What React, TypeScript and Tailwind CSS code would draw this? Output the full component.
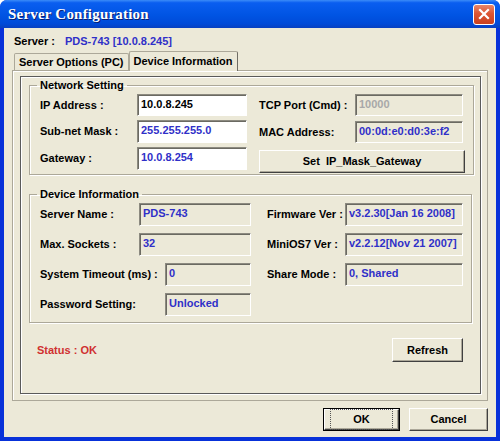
import type { ReactNode } from "react";

const BLUE = "text-[#3030c8]";

export default function App() {
  return (
    <div className="w-[500px] h-[444px] bg-white font-['Liberation_Sans',Arial,sans-serif] text-[11px] font-bold text-black">
      <div className="w-[500px] h-[441px] flex flex-col rounded-t-[7px] bg-[#0831d9] overflow-hidden">
        <TitleBar />
        <div className="flex-1 mx-[4px] mb-[4px] bg-[#ece9d8] flex flex-col">
          <div className="flex items-center h-[24px] pl-[10px] pt-[2px] gap-[10px]">
            <span>Server :</span>
            <span className={BLUE}>PDS-743 [10.0.8.245]</span>
          </div>

          <div className="flex items-end pl-[10px] h-[18px]">
            <div className="h-[17px] px-[4px] flex items-center border border-b-0 border-[#aca899] rounded-t-[2px] bg-[#ece9d8]">
              Server Options (PC)
            </div>
            <div className="h-[20px] px-[4px] flex items-center border border-b-0 border-[#aca899] border-r-[#6f6d64] rounded-t-[2px] bg-[#ece9d8] relative top-[1px] z-10">
              Device Information
            </div>
          </div>

          <div className="mx-[8px] h-[331px] border border-[#aca899] shadow-[inset_1px_1px_0_#fff] pt-[5px] pl-[7px] pr-[6px]">
            <div className="h-[318px] border border-[#5a5a5a] shadow-[1px_1px_0_#fff,inset_1px_1px_0_#fff] px-[8px] flex flex-col">
              <Group title="Network Setting" className="mt-[2px] h-[96px]">
                <div className="flex pt-[3px] pl-[10px] pr-[8px]">
                  <div className="flex flex-col gap-[4px] w-[208px]">
                    <Row label="IP Address :" labelW="w-[97px]">
                      <Field className="w-[110px] h-[22px] bg-white">10.0.8.245</Field>
                    </Row>
                    <Row label="Sub-net Mask :" labelW="w-[97px]">
                      <Field className={`w-[110px] h-[23px] bg-white ${BLUE}`}>255.255.255.0</Field>
                    </Row>
                    <Row label="Gateway :" labelW="w-[97px]">
                      <Field className={`w-[110px] h-[23px] bg-white ${BLUE}`}>10.0.8.254</Field>
                    </Row>
                  </div>
                  <div className="flex flex-col gap-[5px] ml-[11px] w-[206px]">
                    <Row label="TCP Port (Cmd) :" labelW="w-[96px]">
                      <Field className="w-[108px] h-[22px] bg-[#ece9d8] text-[#a8a8a8]">10000</Field>
                    </Row>
                    <Row label="MAC Address:" labelW="w-[96px]">
                      <Field className={`w-[108px] h-[22px] bg-[#ece9d8] ${BLUE}`}>00:0d:e0:d0:3e:f2</Field>
                    </Row>
                    <Btn className="mt-[2px] w-[206px] h-[23px]">Set&nbsp; IP_Mask_Gateway</Btn>
                  </div>
                </div>
              </Group>

              <Group title="Device Information" className="mt-[13px] h-[135px]">
                <div className="flex pt-[3px] pl-[10px]">
                  <div className="flex flex-col gap-[7px] w-[211px]">
                    <Row label="Server Name :" labelW="flex-1">
                      <Field className={`w-[112px] h-[23px] bg-[#ece9d8] ${BLUE}`}>PDS-743</Field>
                    </Row>
                    <Row label="Max. Sockets :" labelW="flex-1">
                      <Field className={`w-[112px] h-[23px] bg-[#ece9d8] ${BLUE}`}>32</Field>
                    </Row>
                    <Row label="System Timeout (ms) :" labelW="flex-1">
                      <Field className={`w-[86px] h-[23px] bg-[#ece9d8] ${BLUE}`}>0</Field>
                    </Row>
                    <Row label="Password Setting:" labelW="flex-1">
                      <Field className={`w-[86px] h-[23px] bg-[#ece9d8] ${BLUE}`}>Unlocked</Field>
                    </Row>
                  </div>
                  <div className="flex flex-col gap-[7px] ml-[16px] w-[196px]">
                    <Row label="Firmware Ver :" labelW="w-[78px]">
                      <Field className={`w-[118px] h-[23px] bg-[#ece9d8] ${BLUE}`}>v3.2.30[Jan 16 2008]</Field>
                    </Row>
                    <Row label="MiniOS7 Ver :" labelW="w-[78px]">
                      <Field className={`w-[118px] h-[23px] bg-[#ece9d8] ${BLUE}`}>v2.2.12[Nov 21 2007]</Field>
                    </Row>
                    <Row label="Share Mode :" labelW="w-[78px]">
                      <Field className={`w-[118px] h-[23px] bg-[#ece9d8] ${BLUE}`}>0, Shared</Field>
                    </Row>
                  </div>
                </div>
              </Group>

              <div className="flex items-center mt-[15px] pl-[8px] pr-[9px]">
                <span className="text-[#d03030]">Status : OK</span>
                <Btn className="ml-auto w-[71px] h-[24px]">Refresh</Btn>
              </div>
            </div>
          </div>

          <div className="flex justify-end gap-[9px] pr-[8px] mt-[7px]">
            <button className="w-[77px] h-[23px] border border-black bg-[#ece9d8] p-0">
              <span className="flex items-center justify-center w-full h-full border border-t-white border-l-white border-r-[#404040] border-b-[#404040] shadow-[inset_-1px_-1px_0_#aca899]">
                <span className="px-[22px] py-[1px] border border-dotted border-[#555]">OK</span>
              </span>
            </button>
            <Btn className="w-[79px] h-[23px]">Cancel</Btn>
          </div>
        </div>
      </div>
    </div>
  );
}

function TitleBar() {
  return (
    <div className="h-[28px] flex items-center pl-[8px] pr-[5px] bg-[linear-gradient(180deg,#3b8cf8_0%,#0a5ef0_10%,#0054e3_55%,#004ad8_85%,#0840c0_100%)]">
      <span className="text-white font-['Liberation_Serif','Times_New_Roman',serif] font-bold text-[15px] tracking-[0.2px] [text-shadow:1px_1px_0_#0a1e6e]">
        Server Configuration
      </span>
      <div className="ml-auto w-[22px] h-[21px] rounded-[3px] border border-white bg-[linear-gradient(180deg,#e9866a_0%,#dc5533_45%,#c9401f_100%)] flex items-center justify-center">
        <svg width="12" height="12" viewBox="0 0 12 12">
          <path d="M2 2 L10 10 M10 2 L2 10" stroke="#fff" strokeWidth="2.2" strokeLinecap="square" />
        </svg>
      </div>
    </div>
  );
}

function Group({ title, className, children }: { title: string; className: string; children: ReactNode }) {
  return (
    <fieldset className={`border border-[#aca899] shadow-[inset_1px_1px_0_#fff,1px_1px_0_#fff] px-0 pb-0 m-0 ${className}`}>
      <legend className="ml-[7px] px-[3px] leading-[12px]">{title}</legend>
      {children}
    </fieldset>
  );
}

function Row({ label, labelW, children }: { label: string; labelW: string; children: ReactNode }) {
  return (
    <div className="flex items-center">
      <span className={`${labelW} whitespace-nowrap`}>{label}</span>
      {children}
    </div>
  );
}

function Field({ className, children }: { className: string; children: ReactNode }) {
  return (
    <div
      className={`flex items-center px-[3px] pb-[2px] border border-t-[#8c8a80] border-l-[#8c8a80] border-r-white border-b-white shadow-[inset_1px_1px_0_#6b6a62] whitespace-nowrap overflow-hidden ${className}`}
    >
      {children}
    </div>
  );
}

function Btn({ className, children }: { className: string; children: ReactNode }) {
  return (
    <button
      className={`flex items-center justify-center bg-[#ece9d8] border border-t-white border-l-white border-r-[#404040] border-b-[#404040] shadow-[inset_-1px_-1px_0_#aca899] font-bold ${className}`}
    >
      {children}
    </button>
  );
}
